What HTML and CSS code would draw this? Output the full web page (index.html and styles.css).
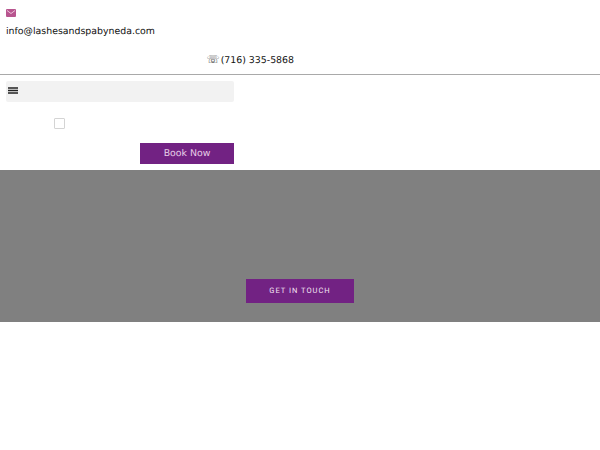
FILE: index.html
```html
<!DOCTYPE html>
<html lang="en">
<head>
<meta charset="utf-8">
<title>Lashes and Spa by Neda</title>
<link rel="stylesheet" href="styles.css">
</head>
<body>
<header class="top">
  <div class="contact">
    <svg class="mail" width="10" height="8" viewBox="0 0 10 8"><rect width="10" height="8" rx="1" fill="#b8558f"/><path d="M1 1.5 5 4.5 9 1.5" fill="none" stroke="#eec4dc" stroke-width="1"/></svg>
    <a class="email">info@lashesandspabyneda.com</a>
  </div>
  <div class="phone"><span class="phone-icon">☏</span>(716) 335-5868</div>
</header>
<nav class="left">
  <div class="menu">
    <svg class="bars" width="10" height="7" viewBox="0 0 10 7"><path d="M0 1h10M0 3.5h10M0 6h10" stroke="#222" stroke-width="1.4"/></svg>
  </div>
  <div class="check-row"><span class="check"></span></div>
  <div class="book-row"><a class="book">Book Now</a></div>
</nav>
<section class="hero">
  <a class="touch">GET IN TOUCH</a>
</section>
</body>
</html>
```
FILE: styles.css
```css
* { box-sizing: border-box; }
html, body { margin: 0; padding: 0; background: #fff; }
body { font-family: "DejaVu Sans", sans-serif; color: #111; width: 600px; height: 450px; overflow: hidden; text-rendering: geometricPrecision; }
.top { height: 75px; border-bottom: 1px solid #a9a9a9; display: flex; flex-direction: column; }
.contact { padding: 9px 0 0 6px; display: flex; flex-direction: column; align-items: flex-start; }
.mail { display: block; }
.email { font-size: 9.4px; line-height: 14px; margin-top: 8px; }
.phone { width: 294px; text-align: right; font-size: 9.4px; line-height: 14px; margin-top: 14px; }
.phone-icon { display: inline-block; color: #222; opacity: 0.85; font-size: 10.5px; margin-right: 1px; }
.left { width: 234px; margin-left: 6px; display: flex; flex-direction: column; }
.menu { height: 21px; margin-top: 6px; background: #f2f2f2; border-radius: 2px; display: flex; align-items: center; padding-left: 2px; width: 228px; }
.bars { margin-bottom: 2px; }
.check-row { padding: 16px 0 0 48px; height: 40px; }
.check { display: block; width: 11px; height: 11px; border: 1px solid #d4d4d4; background: #fff; border-radius: 1px; }
.book-row { display: flex; justify-content: flex-end; width: 228px; margin-top: 1px; }
.book { width: 94px; height: 21px; background: #722283; color: #e8cfe8; font-size: 9.4px; line-height: 22px; text-align: center; }
.hero { height: 152px; margin-top: 6px; background: #808080; display: flex; justify-content: center; align-items: flex-end; padding-bottom: 19px; }
.touch { width: 108px; height: 24px; background: #722283; color: #f3e4f3; font-family: Roboto, sans-serif; font-size: 7.5px; font-weight: 400; letter-spacing: 1px; line-height: 24px; text-align: center; }
```
